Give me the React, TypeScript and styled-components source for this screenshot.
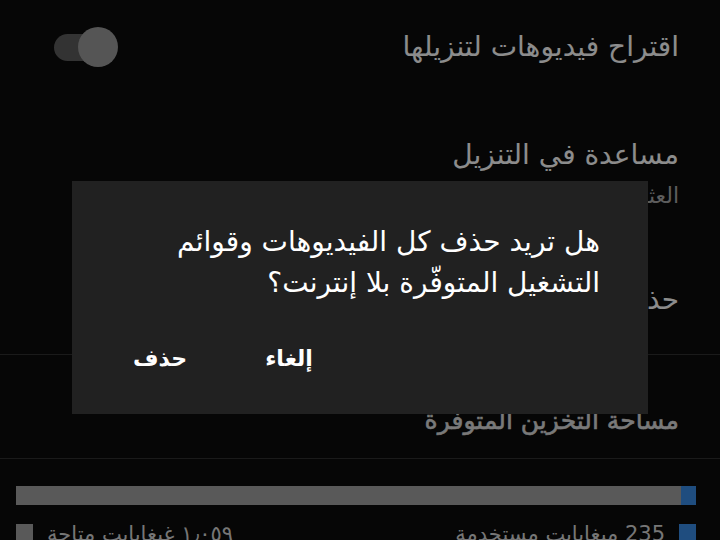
import styled, { createGlobalStyle } from "styled-components";

const GlobalStyle = createGlobalStyle`
  html, body {
    margin: 0;
    padding: 0;
    background: #0b0b0b;
    overflow: hidden;
  }
`;

function App() {
  return (
    <>
      <GlobalStyle />
      <Page>
        <ToggleRow>
          <Title>اقتراح فيديوهات لتنزيلها</Title>
          <Switch>
            <span className="track" />
            <span className="knob" />
          </Switch>
        </ToggleRow>
        <TextRow $top={43} $bottom={0}>
          <Title>مساعدة في التنزيل</Title>
          <Subtitle>العثور تلقائيًا على فيديوهات وتنزيلها</Subtitle>
        </TextRow>
        <TextRow $top={71} $bottom={36}>
          <Title>حذف كل عمليات التنزيل</Title>
        </TextRow>
        <Divider />
        <TextRow $top={48} $bottom={19}>
          <SectionHeader>مساحة التخزين المتوفرة</SectionHeader>
        </TextRow>
        <Divider />
        <Storage>
          <Bar>
            <span className="used" />
          </Bar>
          <Legend>
            <LegendItem>
              <Swatch $color="#3a8ce8" />
              <span>235 ميغابايت مستخدمة</span>
            </LegendItem>
            <LegendItem>
              <span>١٫٠٥٩ غيغابايت متاحة</span>
              <Swatch $color="#a3a3a3" />
            </LegendItem>
          </Legend>
        </Storage>
        <Scrim />
        <Dialog>
          <Message>
            هل تريد حذف كل الفيديوهات وقوائم التشغيل المتوفّرة بلا إنترنت؟
          </Message>
          <Actions>
            <ActionButton>إلغاء</ActionButton>
            <ActionButton>حذف</ActionButton>
          </Actions>
        </Dialog>
      </Page>
    </>
  );
}
export default App;

const Page = styled.div`
  position: relative;
  direction: rtl;
  width: 720px;
  height: 540px;
  overflow: hidden;
  background: #0b0b0b;
  font-family: "DejaVu Sans", "Noto Sans", sans-serif;
`;

const ToggleRow = styled.div`
  display: flex;
  align-items: center;
  justify-content: space-between;
  height: 94px;
  padding: 0 41px 0 54px;
`;

const TextRow = styled.div<{ $top: number; $bottom: number }>`
  display: flex;
  flex-direction: column;
  gap: 8px;
  padding: ${(p) => p.$top}px 41px ${(p) => p.$bottom}px 54px;
`;

const Title = styled.div`
  color: #ffffff;
  font-size: 28px;
  line-height: 36px;
  white-space: nowrap;
`;

const SectionHeader = styled(Title)`
  color: #dcdcdc;
  font-size: 25px;
  -webkit-text-stroke: 0.6px #dcdcdc;
`;

const Subtitle = styled.div`
  color: #aaaaaa;
  font-size: 22px;
  line-height: 30px;
  white-space: nowrap;
`;

const Switch = styled.div`
  position: relative;
  width: 64px;
  height: 40px;
  flex-shrink: 0;
  .track {
    position: absolute;
    left: 0;
    top: 7px;
    width: 46px;
    height: 27px;
    border-radius: 14px;
    background: #5d5d5d;
  }
  .knob {
    position: absolute;
    right: 0;
    top: 0;
    width: 40px;
    height: 40px;
    border-radius: 50%;
    background: #9b9b9b;
  }
`;

const Divider = styled.div`
  height: 1px;
  background: #303030;
`;

const Storage = styled.div`
  padding: 27px 24px 0 16px;
`;

const Bar = styled.div`
  display: flex;
  height: 19px;
  background: #a3a3a3;
  .used {
    width: 15px;
    background: #3a8ce8;
  }
`;

const Legend = styled.div`
  display: flex;
  justify-content: space-between;
  margin-top: 19px;
`;

const LegendItem = styled.div`
  display: flex;
  align-items: flex-start;
  gap: 14px;
  color: #d8d8d8;
  font-size: 21px;
  line-height: 21px;
`;

const Swatch = styled.span<{ $color: string }>`
  width: 17px;
  height: 17px;
  flex-shrink: 0;
  background: ${(p) => p.$color};
`;

const Scrim = styled.div`
  position: absolute;
  inset: 0;
  background: rgba(0, 0, 0, 0.45);
`;

const Dialog = styled.div`
  position: absolute;
  left: 72px;
  top: 181px;
  width: 576px;
  height: 233px;
  box-sizing: border-box;
  padding: 40px 48px 0 48px;
  background: #212121;
  display: flex;
  flex-direction: column;
`;

const Message = styled.div`
  color: #ffffff;
  font-size: 28px;
  line-height: 41px;
  padding-left: 10px;
`;

const Actions = styled.div`
  display: flex;
  justify-content: flex-end;
  gap: 46px;
  margin-top: 36px;
  margin-left: -3px;
`;

const ActionButton = styled.button`
  border: none;
  background: none;
  padding: 0 16px;
  color: #ffffff;
  font-family: inherit;
  font-size: 22px;
  font-weight: bold;
  line-height: 40px;
  cursor: pointer;
`;
